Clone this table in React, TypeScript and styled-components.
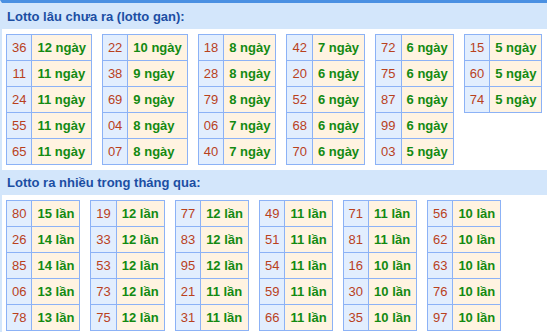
import { createGlobalStyle, styled } from 'styled-components';

const GlobalStyle = createGlobalStyle`
    html, body {
        margin: 0;
        padding: 0;
        background: #ffffff;
    }

    body {
        font-family: "Liberation Sans", Arial, sans-serif;
        font-size: 13px;
    }
`;

const StyledPanel = styled.div`
    width: 547px;
    border-top: 3px solid #4a90e2;
    border-left: 2px solid #d3e6fb;
    box-sizing: border-box;
`;

const SectionTitle = styled.div<{ $height: number }>`
    height: ${p => p.$height}px;
    display: flex;
    align-items: center;
    padding-left: 5px;
    background: #d3e6fb;
    color: #1b4ea3;
    font-weight: 700;
    font-size: 13px;
`;

const BoardRow = styled.div<{ $bottom: number }>`
    display: flex;
    align-items: flex-start;
    gap: 10px;
    padding: 5px 0 ${p => p.$bottom}px 4px;
`;

const Board = styled.div`
    display: grid;
    grid-template-columns: auto auto;
    border-top: 1px solid #8cb2f6;
    border-left: 1px solid #8cb2f6;
`;

const Cell = styled.div<{ $kind: 'num' | 'count' }>`
    height: 26px;
    box-sizing: border-box;
    display: flex;
    align-items: center;
    justify-content: ${p => (p.$kind === 'num' ? 'center' : 'flex-start')};
    padding: 0 5px;
    border-right: 1px solid #8cb2f6;
    border-bottom: 1px solid #8cb2f6;
    white-space: nowrap;
    background: ${p => (p.$kind === 'num' ? '#e2eefe' : '#fff3e1')};
    color: ${p => (p.$kind === 'num' ? '#b9411d' : '#138a12')};
    font-weight: ${p => (p.$kind === 'num' ? 400 : 700)};
`;

type Entry = [string, number];

const gan: Entry[][] = [
    [['36', 12], ['11', 11], ['24', 11], ['55', 11], ['65', 11]],
    [['22', 10], ['38', 9], ['69', 9], ['04', 8], ['07', 8]],
    [['18', 8], ['28', 8], ['79', 8], ['06', 7], ['40', 7]],
    [['42', 7], ['20', 6], ['52', 6], ['68', 6], ['70', 6]],
    [['72', 6], ['75', 6], ['87', 6], ['99', 6], ['03', 5]],
    [['15', 5], ['60', 5], ['74', 5]],
];

const frequent: Entry[][] = [
    [['80', 15], ['26', 14], ['85', 14], ['06', 13], ['78', 13]],
    [['19', 12], ['33', 12], ['53', 12], ['73', 12], ['75', 12]],
    [['77', 12], ['83', 12], ['95', 12], ['21', 11], ['31', 11]],
    [['49', 11], ['51', 11], ['54', 11], ['59', 11], ['66', 11]],
    [['71', 11], ['81', 11], ['16', 10], ['30', 10], ['35', 10]],
    [['56', 10], ['62', 10], ['63', 10], ['76', 10], ['97', 10]],
];

const Boards = ({ groups, unit, bottom }: { groups: Entry[][]; unit: string; bottom: number }) => (
    <BoardRow $bottom={bottom}>
        {groups.map((group, i) => (
            <Board key={i}>
                {group.map(([num, count]) => [
                    <Cell key={`n${num}`} $kind="num">{num}</Cell>,
                    <Cell key={`c${num}`} $kind="count">{`${count} ${unit}`}</Cell>,
                ])}
            </Board>
        ))}
    </BoardRow>
);

export default function App() {
    return (
        <>
            <GlobalStyle />
            <StyledPanel>
                <SectionTitle $height={26}>Lotto lâu chưa ra (lotto gan):</SectionTitle>
                <Boards groups={gan} unit="ngày" bottom={5} />
                <SectionTitle $height={25}>Lotto ra nhiều trong tháng qua:</SectionTitle>
                <Boards groups={frequent} unit="lần" bottom={4} />
            </StyledPanel>
        </>
    );
}
